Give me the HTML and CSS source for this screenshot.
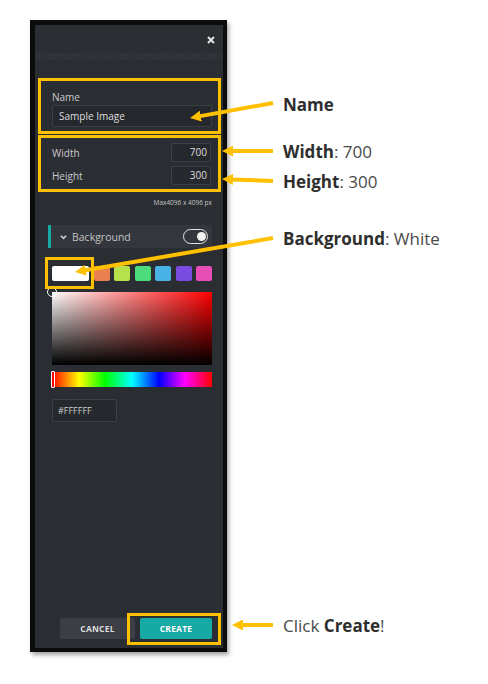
FILE: index.html
```html
<!DOCTYPE html>
<html lang="en">
<head>
    <meta charset="UTF-8">
    <title>New Image</title>
    <meta name="viewport" content="width=device-width, initial-scale=1.0">
    <link rel="stylesheet" href="styles.css">
</head>
<body>
<div class="figure">
    <div class="dialog">
        <div class="dialog-head">
            <button class="close-btn" aria-label="Close">
                <svg viewBox="0 0 8 8"><path d="M1 1l6 6M7 1l-6 6"/></svg>
            </button>
        </div>
        <div class="dialog-hatch"></div>
        <div class="dialog-body">
            <div class="name-group callout">
                <div class="field-label">Name</div>
                <div class="text-input">Sample Image</div>
            </div>
            <div class="size-group callout">
                <div class="size-row">
                    <span class="field-label">Width</span>
                    <span class="num-input">700</span>
                </div>
                <div class="size-row">
                    <span class="field-label">Height</span>
                    <span class="num-input">300</span>
                </div>
            </div>
            <div class="size-note">Max4096 x 4096 px</div>

            <div class="section-head">
                <svg class="chevron" viewBox="0 0 8 6"><path d="M1 1.5l3 3 3-3"/></svg>
                <span class="section-title">Background</span>
                <span class="toggle"><span class="knob"></span></span>
            </div>

            <div class="swatches">
                <span class="swatch selected" style="background:#ffffff"></span>
                <span class="swatch" style="background:#e8804f"></span>
                <span class="swatch" style="background:#b6e14b"></span>
                <span class="swatch" style="background:#4ddc7d"></span>
                <span class="swatch" style="background:#4ab3e6"></span>
                <span class="swatch" style="background:#7a4be0"></span>
                <span class="swatch" style="background:#e74fb6"></span>
            </div>
            <div class="sv-box"><span class="sv-handle"></span></div>
            <div class="hue-bar"><span class="hue-handle"></span></div>
            <div class="hex-input">#FFFFFF</div>

            <div class="dialog-actions">
                <button class="btn btn-cancel">Cancel</button>
                <button class="btn btn-create">Create</button>
            </div>
        </div>
    </div>

    <div class="notes">
        <div class="note note-name"><b>Name</b></div>
        <div class="note note-width"><b>Width</b>: 700</div>
        <div class="note note-height"><b>Height</b>: 300</div>
        <div class="note note-bg"><b>Background</b>: White</div>
        <div class="note note-create">Click <b>Create</b>!</div>
    </div>

    <svg class="arrows" viewBox="0 0 488 684">
        <defs>
            <marker id="head" viewBox="0 0 11 11" refX="2" refY="5.5" markerWidth="11" markerHeight="11"
                    markerUnits="userSpaceOnUse" orient="auto">
                <path d="M0 0L11 5.5L0 11z" fill="#ffc000"/>
            </marker>
        </defs>
        <line x1="273" y1="103" x2="198.9" y2="116.4"/>
        <line x1="273" y1="151" x2="231" y2="151"/>
        <line x1="273" y1="181" x2="231" y2="179.4"/>
        <line x1="273" y1="238" x2="83.9" y2="270.5"/>
        <line x1="273" y1="625" x2="241" y2="625"/>
    </svg>
</div>
</body>
</html>
```

FILE: styles.css
```css
:root {
    --panel: #2a2d32;
    --panel-light: #33363c;
    --input-bg: #25282d;
    --input-border: #3c3f45;
    --text-light: #c9cacc;
    --teal: #17aaa4;
    --gold: #ffc000;
}
body {
    margin: 0;
    background: #fff;
    font-family: 'Open Sans', 'Noto Sans', Arial, sans-serif;
}
.figure {
    position: relative;
    width: 488px;
    height: 684px;
    display: flex;
    align-items: flex-start;
    padding: 20px 0 0 30px;
    box-sizing: border-box;
}

/* dialog */
.dialog {
    width: 197px;
    height: 632px;
    box-sizing: border-box;
    border-style: solid;
    border-color: #0c0c0d;
    border-width: 5px 4px 4px 5px;
    background: var(--panel);
    box-shadow: 2px 3px 4px rgba(0,0,0,0.35);
    display: flex;
    flex-direction: column;
}
.dialog-head {
    height: 28px;
    display: flex;
    align-items: center;
    justify-content: flex-end;
    padding-right: 8px;
}
.close-btn {
    border: none;
    background: none;
    padding: 0;
    width: 8px;
    height: 8px;
    display: block;
    margin-top: 2px;
}
.close-btn svg {
    width: 8px;
    height: 8px;
    display: block;
    stroke: #e4e4e4;
    stroke-width: 2;
}
.dialog-hatch {
    height: 7px;
    background: repeating-linear-gradient(-45deg, #34373c 0 1px, #2c2f34 1px 3px);
}
.dialog-body {
    flex: 1;
    display: flex;
    flex-direction: column;
    padding: 18px 11px 9px 17px;
}

.callout {
    border: 3px solid var(--gold);
    margin: 0 -9px 0 -14px;
    padding: 0 6px 0 11px;
}
.field-label {
    font-size: 10px;
    line-height: 12px;
    color: var(--text-light);
}
.name-group {
    padding-top: 10px;
    padding-bottom: 4px;
}
.text-input {
    margin-top: 2px;
    height: 22px;
    box-sizing: border-box;
    background: var(--input-bg);
    border: 1px solid var(--input-border);
    border-radius: 2px;
    font-size: 10px;
    line-height: 20px;
    color: #dedede;
    padding-left: 6px;
}
.size-group {
    margin-top: 1px;
    padding-top: 5px;
    padding-bottom: 4px;
    display: flex;
    flex-direction: column;
    gap: 4px;
}
.size-row {
    display: flex;
    align-items: center;
    justify-content: space-between;
}
.num-input {
    width: 40px;
    height: 19px;
    box-sizing: border-box;
    background: var(--input-bg);
    border: 1px solid var(--input-border);
    border-radius: 2px;
    font-size: 10px;
    line-height: 17px;
    color: #dedede;
    text-align: right;
    padding-right: 3px;
    margin-right: 1px;
}
.size-note {
    margin-top: 6px;
    font-size: 6.5px;
    line-height: 9px;
    color: #c4c4c4;
    text-align: right;
}

/* background section */
.section-head {
    margin: 18px 0 0 -4px;
    height: 23px;
    background: var(--panel-light);
    border-left: 3px solid var(--teal);
    display: flex;
    align-items: center;
    padding: 0 4px 0 9px;
    border-radius: 0 2px 2px 0;
}
.chevron {
    width: 7px;
    height: 6px;
    fill: none;
    stroke: #cfcfcf;
    stroke-width: 1.8;
}
.section-title {
    margin-left: 5px;
    font-size: 10.5px;
    color: #c2c3c5;
    flex: 1;
}
.toggle {
    width: 25px;
    height: 15px;
    box-sizing: border-box;
    border: 1.5px solid #e2e2e2;
    border-radius: 8px;
    display: flex;
    align-items: center;
    justify-content: flex-end;
    padding-right: 1.5px;
}
.knob {
    width: 9px;
    height: 9px;
    border-radius: 50%;
    background: #f2f2f2;
}
.swatches {
    margin-top: 18px;
    display: grid;
    grid-template-columns: 1fr repeat(6, 16px);
    gap: 4.5px;
}
.swatch {
    height: 15px;
    border-radius: 2px;
    position: relative;
}
.swatch.selected::after {
    content: "";
    position: absolute;
    top: -9px;
    left: -7px;
    right: -5px;
    bottom: -8px;
    border: 3px solid var(--gold);
    z-index: 2;
}
.sv-box {
    position: relative;
    margin-top: 11px;
    height: 73px;
    background: linear-gradient(to top, #000, rgba(0,0,0,0)),
                linear-gradient(to right, #fff, #ff0000);
}
.sv-handle {
    position: absolute;
    left: -5px;
    top: -5px;
    width: 10px;
    height: 10px;
    box-sizing: border-box;
    border: 1.5px solid #fff;
    border-radius: 50%;
}
.hue-bar {
    position: relative;
    margin-top: 7px;
    height: 15px;
    background: linear-gradient(to right, #f00, #ff0 17%, #0f0 33%, #0ff 50%, #00f 67%, #f0f 83%, #f00);
}
.hue-handle {
    position: absolute;
    left: -1px;
    top: -1px;
    width: 4px;
    height: 17px;
    box-sizing: border-box;
    border: 1px solid #fff;
    border-radius: 1px;
    background: #f00;
}
.hex-input {
    margin-top: 12px;
    width: 65px;
    height: 23px;
    box-sizing: border-box;
    background: var(--input-bg);
    border: 1px solid var(--input-border);
    border-radius: 2px;
    font-size: 9px;
    line-height: 21px;
    color: #cfcfcf;
    padding-left: 5px;
}

.dialog-actions {
    margin-top: auto;
    display: flex;
    gap: 5px;
    padding-left: 8px;
}
.btn {
    height: 21px;
    border: none;
    border-radius: 2px;
    font-family: inherit;
    font-size: 8.5px;
    font-weight: bold;
    text-transform: uppercase;
    letter-spacing: 0.2px;
    padding: 0;
}
.btn-cancel {
    width: 75px;
    background: #3b3e44;
    color: #dcdcdc;
}
.btn-create {
    width: 72px;
    background: var(--teal);
    color: #fff;
    position: relative;
}
.btn-create::after {
    content: "";
    position: absolute;
    top: -5px;
    left: -13px;
    right: -9px;
    bottom: -6px;
    border: 3px solid var(--gold);
}

/* annotations */
.notes {
    margin-left: 56px;
    display: flex;
    flex-direction: column;
    font-size: 17px;
    line-height: 20px;
    color: #4a4a4a;
}
.note b {
    color: #2e2e2e;
}
.note-name { margin-top: 75px; }
.note-width { margin-top: 27px; }
.note-height { margin-top: 10px; }
.note-bg { margin-top: 37px; }
.note-create { margin-top: 367px; }

.arrows {
    position: absolute;
    left: 0;
    top: 0;
    width: 488px;
    height: 684px;
    pointer-events: none;
}
.arrows line {
    stroke: var(--gold);
    stroke-width: 4;
    marker-end: url(#head);
}
```
